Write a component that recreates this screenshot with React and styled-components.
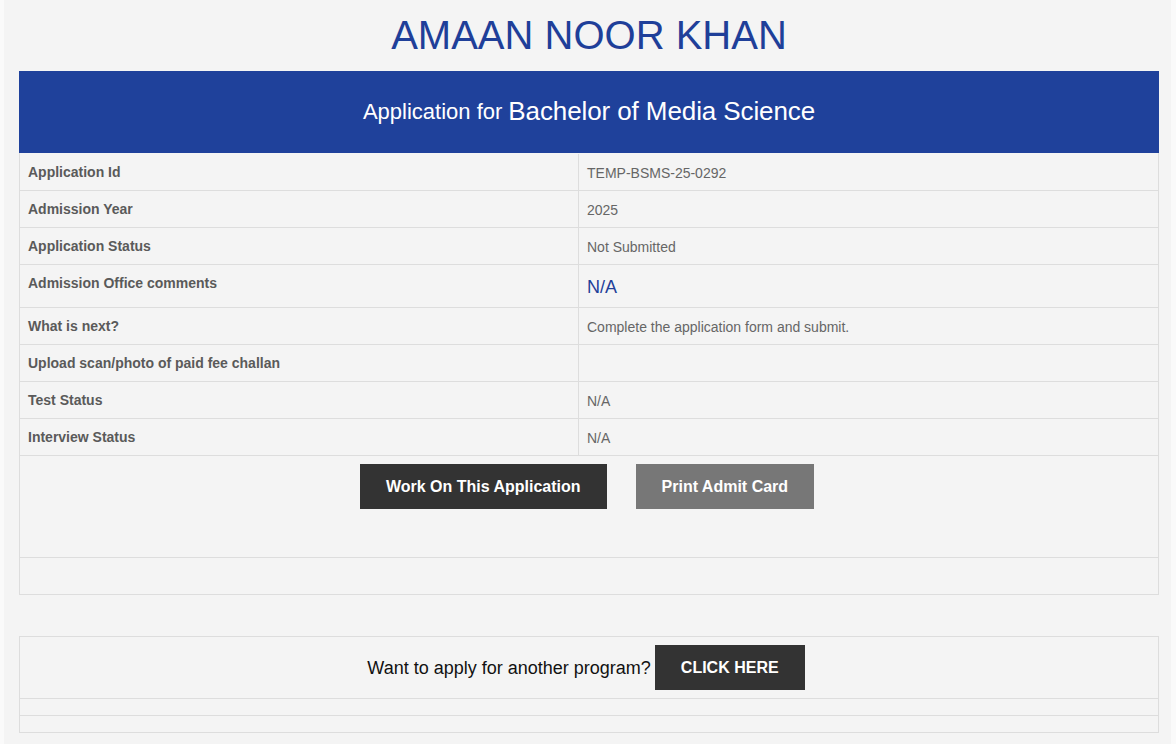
import React from "react";
import styled, { createGlobalStyle } from "styled-components";

const GlobalStyle = createGlobalStyle`
  html, body {
    margin: 0;
    padding: 0;
    background: #fafafa;
  }
  body {
    font-family: "Liberation Sans", Arial, sans-serif;
    font-size: 14px;
    line-height: 1.42857;
    color: #333;
  }
`;

const Page = styled.div`
  display: flow-root;
  margin: 0 5px 0 4px;
  min-height: 744px;
  background: #f4f4f4;
  padding: 0 15px;
  box-sizing: border-box;
`;

const Container = styled.div`
  width: 1140px;
`;

const Name = styled.h1`
  margin: 13px 0 14px;
  text-align: center;
  font-size: 40px;
  font-weight: 400;
  line-height: 44px;
  color: #1f3f99;
`;

const Table = styled.div`
  border: 1px solid #dddddd;
  border-top: none;
`;

const Banner = styled.div`
  height: 82px;
  margin: 0 -1px;
  background: #1f419b;
  color: #fff;
  display: flex;
  align-items: center;
  justify-content: center;
  padding: 0 0 1px 0;
  box-sizing: border-box;
`;

const Small = styled.span`
  font-size: 22px;
  margin-right: 6px;
`;

const Big = styled.span`
  font-size: 26px;
  letter-spacing: -0.1px;
`;

const Row = styled.div`
  display: grid;
  grid-template-columns: 559px 1fr;
  border-top: 1px solid ${(p) => (p.first ? "transparent" : "#dddddd")};
`;

const Label = styled.div`
  padding: 9px 8px 7px;
  font-weight: 700;
  color: #5a5a5a;
  border-right: 1px solid #dddddd;
  min-height: 20px;
`;

const Value = styled.div`
  padding: 9px 8px 7px;
  font-size: ${(p) => (p.big ? "18px" : "14px")};
  color: ${(p) => (p.big ? "#1f3f99" : "#666")};
  line-height: ${(p) => (p.big ? "26px" : "20px")};
`;

const Cell = styled.div`
  border-top: 1px solid #dddddd;
  padding: ${(p) => p.pad || "8px"};
  display: flex;
  justify-content: center;
  align-items: ${(p) => p.align || "flex-start"};
  gap: ${(p) => p.gap || "0"};
`;

const Button = styled.button`
  height: 45px;
  padding: 0 26px;
  border: none;
  border-radius: 0;
  background: ${(p) => (p.muted ? "#777777" : "#333333")};
  color: #fff;
  font-family: "Liberation Sans", Arial, sans-serif;
  font-size: 16px;
  font-weight: 700;
  cursor: pointer;
`;

const Spacer = styled.div`
  height: 41px;
`;

const Box = styled.div`
  border: 1px solid #dddddd;
  border-top: none;
`;

const Prompt = styled.span`
  font-size: 18px;
  color: #111;
  margin-right: 4px;
  padding-top: 2px;
`;

const rows = [
  ["Application Id", "TEMP-BSMS-25-0292"],
  ["Admission Year", "2025"],
  ["Application Status", "Not Submitted"],
  ["Admission Office comments", "N/A", true],
  ["What is next?", "Complete the application form and submit."],
  ["Upload scan/photo of paid fee challan", ""],
  ["Test Status", "N/A"],
  ["Interview Status", "N/A"],
];

export default function App() {
  return (
    <>
      <GlobalStyle />
      <Page>
        <Container>
          <Name>AMAAN NOOR KHAN</Name>
          <Table>
            <Banner>
              <Small>Application for</Small>
              <Big>Bachelor of Media Science</Big>
            </Banner>
            {rows.map(([label, value, big], i) => (
              <Row key={label} first={i === 0}>
                <Label>{label}</Label>
                <Value big={big}>{value}</Value>
              </Row>
            ))}
            <Cell pad="8px 4px 48px 0" gap="29px">
              <Button>Work On This Application</Button>
              <Button muted>Print Admit Card</Button>
            </Cell>
            <Cell pad="18px 8px" />
          </Table>
          <Spacer />
          <Box>
            <Cell pad="8px 6px 8px 0" align="center">
              <Prompt>Want to apply for another program?</Prompt>
              <Button>CLICK HERE</Button>
            </Cell>
            <Cell pad="8px" />
            <Cell pad="8px" />
          </Box>
        </Container>
      </Page>
    </>
  );
}
